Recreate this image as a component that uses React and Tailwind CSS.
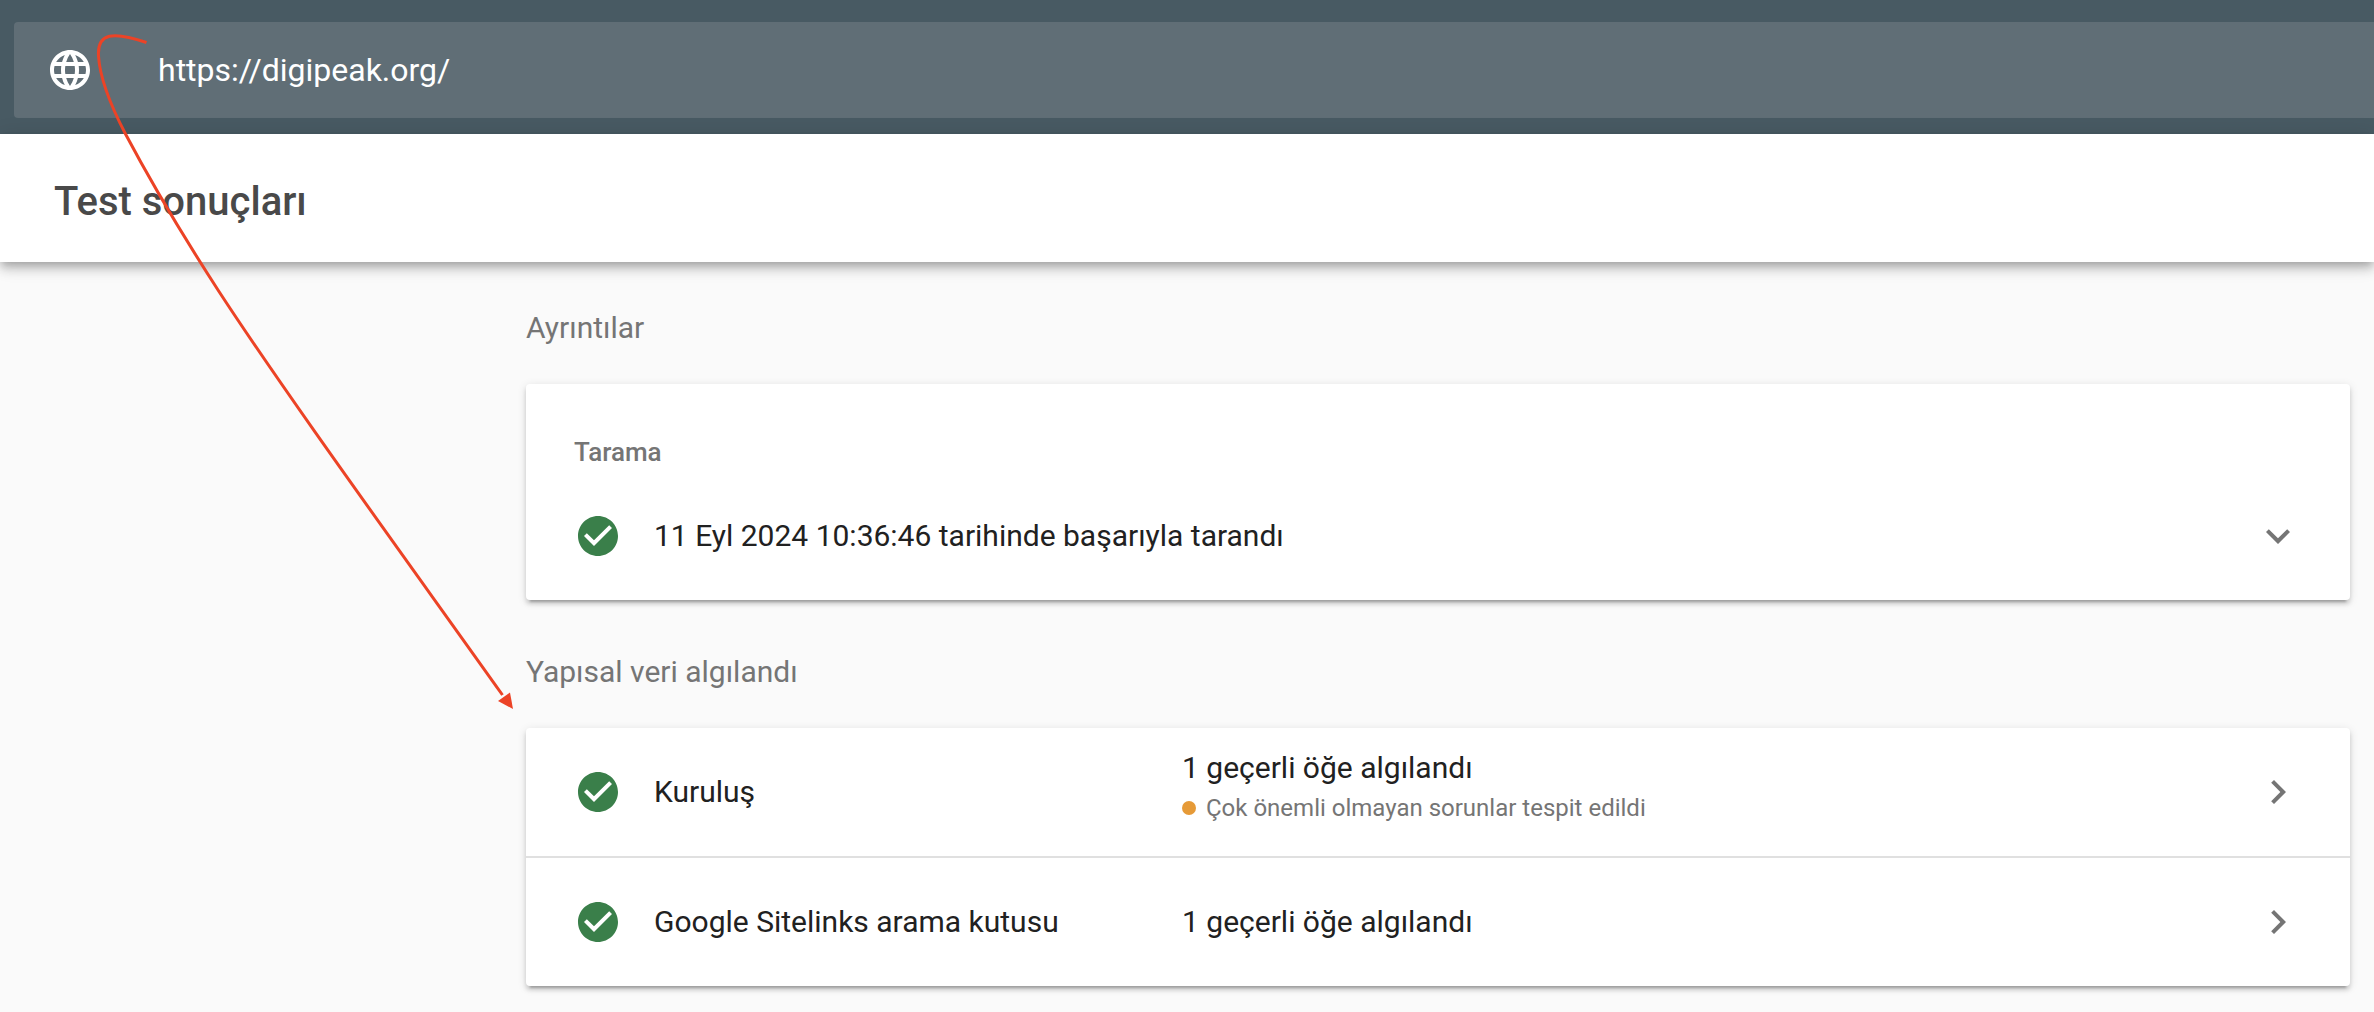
import { useState } from "react";
import { MdCheckCircle, MdChevronRight, MdExpandMore, MdLanguage } from "react-icons/md";

const results = [
  {
    name: "Kuruluş",
    summary: "1 geçerli öğe algılandı",
    warning: "Çok önemli olmayan sorunlar tespit edildi",
  },
  { name: "Google Sitelinks arama kutusu", summary: "1 geçerli öğe algılandı" },
];

function SectionTitle({ children }) {
  return <h2 className="pb-8 text-[30px] leading-[48px] text-[#757575]">{children}</h2>;
}

function Card({ children }) {
  return (
    <div className="rounded-[4px] bg-white shadow-[0_6px_2px_-4px_rgba(0,0,0,0.2),0_4px_4px_0_rgba(0,0,0,0.14),0_2px_10px_0_rgba(0,0,0,0.12)]">
      {children}
    </div>
  );
}

function StatusIcon() {
  return <MdCheckCircle className="mr-8 size-12 shrink-0 text-[#3a7f4a]" aria-hidden="true" />;
}

function ResultRow({ name, summary, warning }) {
  return (
    <li>
      <button type="button" className="flex h-32 w-full items-center pr-12 pl-12 text-left text-[30px] leading-10">
        <StatusIcon />
        <span className="w-[528px] shrink-0">{name}</span>
        <span className={warning ? "flex flex-1 flex-col pb-2" : "flex flex-1 flex-col"}>
          <span>{summary}</span>
          {warning && (
            <span className="flex items-center gap-[10px] text-[24px] text-[#757575]">
              <span className="size-[14px] rounded-full bg-[#e69a37]" />
              {warning}
            </span>
          )}
        </span>
        <MdChevronRight className="size-12 shrink-0 text-[#757575]" aria-hidden="true" />
      </button>
    </li>
  );
}

function Arrow() {
  return (
    <svg
      className="pointer-events-none absolute top-0 left-0"
      width="540"
      height="730"
      viewBox="0 0 540 730"
      fill="none"
      aria-hidden="true"
    >
      <path
        d="M146.500 42.500C113 31 97 33 98.500 56C100 80 113 110 125.500 134C152 184 187 242 218 290C285 393 400 551 502.500 695"
        stroke="#ec4326"
        strokeWidth="3"
      />
      <path d="M498 701L510 692.500L513 709Z" fill="#ec4326" />
    </svg>
  );
}

export default function App() {
  const [url, setUrl] = useState("https://digipeak.org/");
  return (
    <div className="relative min-h-screen bg-[#fafafa] font-['Roboto',sans-serif] text-[#212121]">
      <header className="bg-[#485a63] pt-[22px] pb-4 pl-[14px]">
        <label className="flex h-24 items-center gap-16 rounded-l-[4px] bg-[#606e76] pl-8">
          <MdLanguage className="size-12 shrink-0 text-white" aria-hidden="true" />
          <input
            type="text"
            aria-label="URL"
            value={url}
            onChange={(e) => setUrl(e.target.value)}
            className="h-12 min-w-0 flex-1 bg-transparent text-[32px] text-white outline-none"
          />
        </label>
      </header>

      <div className="relative flex h-32 items-center bg-white px-[54px] pt-2 shadow-[0_4px_8px_-2px_rgba(0,0,0,0.2),0_8px_10px_0_rgba(0,0,0,0.14),0_2px_20px_0_rgba(0,0,0,0.12)]">
        <h1 className="text-[40px] leading-[48px] font-medium text-[#494949]">Test sonuçları</h1>
      </div>

      <main className="flex flex-col gap-12 pt-[42px] pr-6 pb-6 pl-[526px]">
        <section>
          <SectionTitle>Ayrıntılar</SectionTitle>
          <Card>
            <div className="px-12 pt-12 pb-10">
              <h3 className="text-[26px] leading-10 font-medium text-[#757575]">Tarama</h3>
              <button type="button" className="mt-10 flex h-12 w-full items-center text-left text-[30px] leading-10">
                <StatusIcon />
                <span className="flex-1">11 Eyl 2024 10:36:46 tarihinde başarıyla tarandı</span>
                <MdExpandMore className="size-12 shrink-0 text-[#757575]" aria-hidden="true" />
              </button>
            </div>
          </Card>
        </section>

        <section>
          <SectionTitle>Yapısal veri algılandı</SectionTitle>
          <Card>
            <ul className="divide-y-2 divide-[#e0e0e0]">
              {results.map((r) => (
                <ResultRow key={r.name} {...r} />
              ))}
            </ul>
          </Card>
        </section>
      </main>

      <Arrow />
    </div>
  );
}
